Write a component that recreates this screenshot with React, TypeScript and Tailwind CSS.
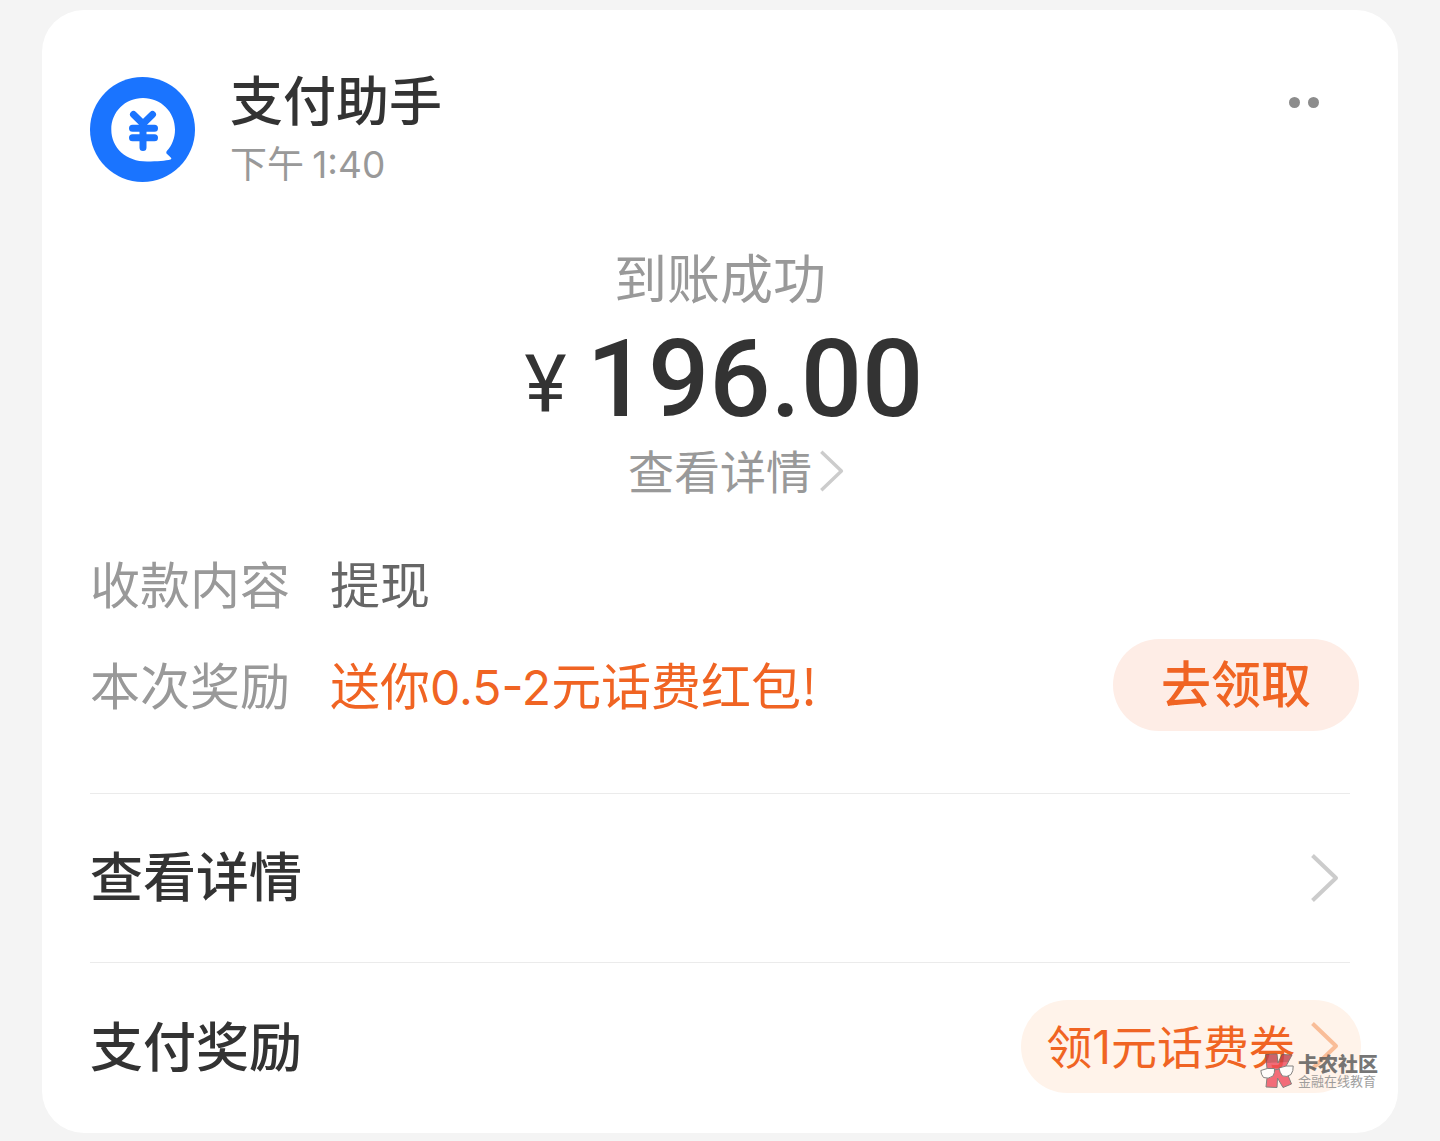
type ChevronProps = { className: string; strokeWidth?: number };

function Chevron({ className, strokeWidth = 4 }: ChevronProps) {
  return (
    <svg viewBox="0 0 28 48" fill="none" className={className} aria-hidden="true">
      <path d="M1.500 1.500L25 24L1.500 46.500" stroke="currentColor" strokeWidth={strokeWidth} strokeLinejoin="round" />
    </svg>
  );
}

function Avatar() {
  return (
    <svg viewBox="0 0 105 105" className="mt-[11px] size-[105px] shrink-0" role="img" aria-label="支付助手">
      <circle cx="52.5" cy="52.5" r="52.5" fill="#1a74ff" />
      <path
        d="M53 21C35 21 21.300 35 21.300 52.500C21.300 71 36 84.500 57 84.500C67 84.500 76 83.800 80.500 82.500C81.800 82 81.500 81 80.500 80.200L76.500 76.500C76 75.500 76.500 74.500 77 73.800C82 68.500 85 61 85 52.500C85 35 71 21 53 21Z"
        fill="#fff"
      />
      <path
        d="M43.500 37.500L53 46.800L62.500 37.500M42.500 51.300H64.500M42.500 60.700H64.500M53 47V70.500"
        fill="none"
        stroke="#1a74ff"
        strokeWidth="7"
        strokeLinecap="round"
        strokeLinejoin="round"
      />
    </svg>
  );
}

function Watermark() {
  return (
    <div className="pointer-events-none absolute right-5 bottom-11 flex items-center gap-1 opacity-80">
      <svg viewBox="0 0 34 36" className="h-9 w-[34px]" aria-hidden="true">
        <path
          d="M5.500 1.500L17 1L18 10L22 1.500L32 2L25 15L31.500 31L23 34.500L17.500 25L17 34.500L6 34L7.500 20Z"
          fill="#f04b5c"
          stroke="#666"
          strokeWidth="1"
          strokeLinejoin="round"
        />
        <path d="M5.500 1.500L17 1L18 10L22 1.500L32 2L28 9L6 10Z" fill="#8c3030" fillOpacity="0.45" />
        <path
          d="M0.800 17.500Q7 14.500 14.500 15.500Q15 20 13 23Q8 26.500 3.500 24.500Q1 21.500 0.800 17.500Z"
          fill="#fff"
          stroke="#666"
          strokeWidth="1"
        />
        <path
          d="M19 15Q26 12 33.200 13Q33.500 18 31 21.500Q27 24.500 22.500 23Q19.500 19.500 19 15Z"
          fill="#fff"
          stroke="#666"
          strokeWidth="1"
        />
        <path d="M14.500 17L19 16" stroke="#666" strokeWidth="1" />
      </svg>
      <div className="flex flex-col">
        <span className="text-[20px] leading-5 font-black text-[#555]">卡农社区</span>
        <span className="text-[13px] leading-[14px] text-[#888]">金融在线教育</span>
      </div>
    </div>
  );
}

export default function App() {
  return (
    <main
      lang="zh-CN"
      className="min-h-screen bg-[#f4f4f4] px-[42px] pt-[10px] pb-2 font-['Noto_Sans_CJK_SC',sans-serif] text-[#333]"
    >
      <article className="relative rounded-[42px] bg-white px-12 pt-14">
        <header className="flex items-start">
          <Avatar />
          <div className="ml-[35px] flex flex-1 flex-col gap-2">
            <h1 className="text-[53px] leading-[64px] font-medium">支付助手</h1>
            <time className="text-[37px] leading-[48px] text-[#999]">
              下午 <span className="font-['Inter',sans-serif] leading-8">1:40</span>
            </time>
          </div>
          <button type="button" aria-label="更多" className="mt-[31px] mr-[31px] flex gap-2">
            <span className="size-[11px] rounded-full bg-[#8c8c8c]" />
            <span className="size-[11px] rounded-full bg-[#8c8c8c]" />
          </button>
        </header>

        <section className="mt-[58px] flex flex-col items-center">
          <p className="text-[53px] leading-[64px] text-[#999]">到账成功</p>
          <p className="mt-[15px] ml-2 flex items-end font-['Roboto',sans-serif] font-medium">
            <span className="mr-5 pb-[10px] text-[80px] leading-[80px] font-normal">¥</span>
            <span className="text-[108px] leading-[112px]">196.00</span>
          </p>
          <a href="#detail" className="mt-[6px] ml-8 flex items-center gap-2 text-[46px] leading-[56px] text-[#999]">
            查看详情
            <Chevron className="mt-1 h-[42px] w-6 text-[#ccc]" />
          </a>
        </section>

        <dl className="mt-[55px] flex flex-col gap-[27px] text-[50px] leading-[60px]">
          <div className="flex">
            <dt className="w-60 text-[#999]">收款内容</dt>
            <dd className="text-[#666]">提现</dd>
          </div>
          <div className="flex items-center">
            <dt className="w-60 pb-1 text-[#999]">本次奖励</dt>
            <dd className="flex-1 pb-1 text-[#f06423]">
              送你<span className="font-['Inter',sans-serif] text-[48px] leading-10">0.5-2</span>元话费红包!
            </dd>
            <dd className="-mr-[9px]">
              <button
                type="button"
                className="h-[92px] rounded-full bg-[#feede6] px-12 pb-2 font-medium text-[#f06423]"
              >
                去领取
              </button>
            </dd>
          </div>
        </dl>

        <nav className="mt-[62px] text-[53px] font-medium">
          <a href="#detail" className="flex h-[169px] items-center justify-between border-t border-[#ebebeb] pr-[11px]">
            <span className="pb-2 leading-[64px]">查看详情</span>
            <Chevron className="h-12 w-7 text-[#ccc]" />
          </a>
          <a href="#reward" className="flex h-[171px] items-center justify-between border-t border-[#ebebeb] pb-1">
            <span className="pb-1 leading-[64px]">支付奖励</span>
            <span className="-mr-[11px] flex h-[93px] items-center gap-4 rounded-full bg-[#fff3ea] pr-[22px] pl-[25px] text-[46px] font-normal text-[#f06423]">
              <span className="pb-1 leading-[56px]">
                领<span className="font-['Inter',sans-serif] leading-10">1</span>元话费券
              </span>
              <Chevron className="h-12 w-7 text-[#f9bd98]" />
            </span>
          </a>
        </nav>
        <Watermark />
      </article>
    </main>
  );
}
